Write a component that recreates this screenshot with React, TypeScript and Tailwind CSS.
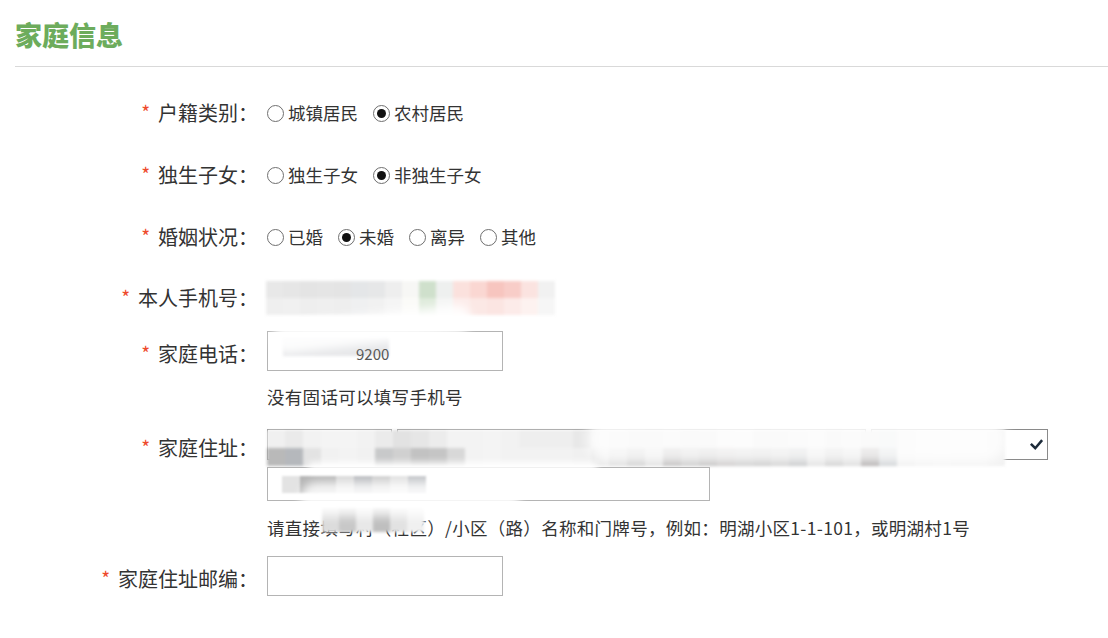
import React from "react";

type RadioProps = { label: string; checked?: boolean };

const Radio = ({ label, checked }: RadioProps) => (
  <span className="inline-flex items-center gap-[4px]">
    <span className="flex items-center justify-center w-[17px] h-[17px] rounded-full border border-[#6f6f6f] bg-white">
      {checked && <span className="w-[9px] h-[9px] rounded-full bg-[#111]" />}
    </span>
    <span>{label}</span>
  </span>
);

const Label = ({ text, low }: { text: string; low?: boolean }) => (
  <div className={"w-[258px] shrink-0 text-right text-[20px] leading-[28px] text-[#333] " + (low ? "pt-[6px]" : "")}>
    <span className="relative top-[-1px] mr-[8px] text-[19px] text-[#ee4a2c]">*</span>
    {text}
  </div>
);

// pixelated privacy blocks, as in the screenshot
const Mosaic = ({ rows, size = 17 }: { rows: string[][]; size?: number }) => (
  <div className="flex flex-col blur-[1.5px]">
    {rows.map((r, i) => (
      <div key={i} className="flex">
        {r.map((c, j) => (
          <span key={j} style={{ width: size, height: size, background: c }} />
        ))}
      </div>
    ))}
  </div>
);

const phoneRows = [
  ["#e8e8e8", "#e6e6e6", "#e4e4e4", "#e5e5e5", "#e4e4e4", "#e4e6e8", "#e6e7e8", "#eeeeee", "#f7f7f5", "#cfe0cc", "#eef0ef", "#fbe1dd", "#fad7d2", "#f7c5bf", "#f8cdc8", "#fbe3e0", "#f1f1f1"],
  ["#efefef", "#f0f0f0", "#eeeeee", "#efefef", "#eeeeee", "#eff0f1", "#f1f1f1", "#f5f5f5", "#fbfbf8", "#dfebdc", "#f4f5f4", "#fcecea", "#fbe8e5", "#fbe5e2", "#fcebe9", "#fdf2f0", "#f6f6f6"],
];

const addrRows = [
  ["#f0f0f0", "#eaeaea", "#f2f2f2", "#f4f4f4", "#f4f4f4", "#f2f2f2", "#ebebeb", "#e2e2e2", "#e6e6e6", "#ececec", "#f3f3f3", "#f3f3f3", "#f4f4f4", "#f2f2f2", "#eeeeee", "#eeeeee", "#eeeeee", "#e8e8e8", "#eeeeee", "#ebebeb", "#e7e7e7", "#e6e6e6", "#e9e9e9", "#e3e3e3", "#e4e4e4", "#eeeeee", "#efefef", "#e6e6e6", "#e7e7e7", "#e9e9e9", "#eeeeee", "#e7e7e7", "#ececec", "#e4e4e4", "#e1e4e6", "#ededed", "#f3f3f3", "#f4f4f4", "#f2f2f2", "#f2f2f2", "#f1f1f1"],
  ["#b9b9b9", "#b5b8bc", "#e3e3e3", "#f1f1f1", "#f3f3f3", "#f1f1f1", "#c8c9ca", "#d0d0d0", "#c2c2c2", "#c5c5c5", "#d8d8d8", "#f3f3f3", "#f4f4f4", "#f2f2f2", "#f2f2f2", "#f2f2f2", "#f2f2f2", "#f0f0f0", "#e8e8e8", "#d9d9d9", "#c8c8c8", "#dcdcdc", "#b5b3b3", "#c2c2c2", "#b9b8b8", "#c4c1c1", "#c6c6c6", "#c2c2c2", "#cacaca", "#bdbfc1", "#dddddd", "#c9c9c9", "#d7d7d7", "#a5a1a1", "#c9cdd0", "#f0f0f0", "#f3f3f3", "#f4f4f4", "#f3f3f3", "#f3f3f3", "#f2f2f2"],
];

const App = () => {
  return (
    <div className="relative w-[1108px] h-[638px] overflow-hidden bg-white font-['Noto_Sans_CJK_SC',sans-serif] text-[#333]">
      <h2 className="pl-[15px] pt-[17px] h-[66px] text-[27px] leading-[36px] font-black text-[#6dac5c]">
        家庭信息
      </h2>
      <div className="ml-[15px] border-t border-[#d9d9d9]" />

      <div className="flex flex-col pt-[26px] text-[17.5px] leading-[24px]">
        <div className="flex items-center h-[40px]">
          <Label text="户籍类别：" />
          <div className="ml-[9px] flex gap-[15px]">
            <Radio label="城镇居民" />
            <Radio label="农村居民" checked />
          </div>
        </div>

        <div className="mt-[22px] flex items-center h-[40px]">
          <Label text="独生子女：" />
          <div className="ml-[9px] flex gap-[15px]">
            <Radio label="独生子女" />
            <Radio label="非独生子女" checked />
          </div>
        </div>

        <div className="mt-[22px] flex items-center h-[40px]">
          <Label text="婚姻状况：" />
          <div className="ml-[9px] flex gap-[15px]">
            <Radio label="已婚" />
            <Radio label="未婚" checked />
            <Radio label="离异" />
            <Radio label="其他" />
          </div>
        </div>

        <div className="mt-[21px] flex items-center h-[40px]">
          <Label text="本人手机号：" />
          <div className="ml-[8px]">
            <Mosaic rows={phoneRows} />
          </div>
        </div>

        <div className="mt-[13px] flex items-center h-[40px]">
          <Label text="家庭电话：" low />
          <div className="ml-[9px] relative w-[236px] h-[40px] border border-[#b4b4b4] bg-white">
            <div className="absolute left-[15px] top-[6px] w-[106px] h-[18px] bg-[#e6e7e9] blur-[1.5px]" />
            <span className="absolute left-[88px] top-[12px] text-[15px] leading-[20px] text-[#555]">9200</span>
            <div className="absolute left-[4px] top-[-18px] w-[200px] h-[30px] rounded-full bg-white/90 blur-[4px] rotate-[-6deg]" />
          </div>
        </div>

        <div className="mt-[16px] pl-[267px] leading-[20px] tracking-[0.3px]">没有固话可以填写手机号</div>

        <div className="mt-[22px] flex items-center h-[31px]">
          <Label text="家庭住址：" low />
          <div className="ml-[9px] relative flex gap-[5px] h-[31px]">
            <div className="w-[125px] border border-[#8a8a8a]" />
            <div className="w-[469px] border border-[#8a8a8a]" />
            <div className="relative w-[177px] border border-[#8a8a8a]">
              <svg className="absolute right-[3px] top-[7px]" width="15" height="15" viewBox="0 0 12 12">
                <path d="M1.5 5.5 L5 9 L10.5 2.5" fill="none" stroke="#1d2b3a" strokeWidth="2" />
              </svg>
            </div>
            <div className="absolute left-[0px] top-[1px]">
              <Mosaic rows={addrRows} size={18} />
            </div>
            <div className="absolute left-[320px] top-[-14px] w-[420px] h-[48px] rounded-full bg-white/80 blur-[6px]" />
          </div>
        </div>

        <div className="mt-[7px] pl-[267px]">
          <div className="relative w-[443px] h-[34px] border border-[#b4b4b4] bg-white">
            <div className="absolute left-[14px] top-[8px] flex blur-[1.2px]">
              {["#e3e3e3", "#b5b5b5", "#b5b5b5", "#d7d7d7", "#b7b9bd", "#cdcdcd", "#e0e0e0", "#c2c4c8"].map((c, i) => (
                <span key={i} style={{ width: 18, height: 17, background: c }} />
              ))}
            </div>
            <div className="absolute left-[40px] top-[-6px] w-[290px] h-[10px] rounded-full bg-white/90 blur-[3px]" />
          </div>
        </div>

        <div className="relative mt-[17px] pl-[267px] leading-[20px] tracking-[0.3px]">
          请直接填写村（社区）/小区（路）名称和门牌号，例如：明湖小区1-1-101，或明湖村1号
          <div className="absolute left-[322px] top-[-10px] flex blur-[1.5px]">
            {["#dcdcdc", "#c8c8c8", "#e8e8e8", "#bfbfbf", "#e2e2e2", "#f0f0f0"].map((c, i) => (
              <span key={i} style={{ width: 17, height: 24, background: c }} />
            ))}
          </div>
          <div className="absolute left-[300px] top-[-36px] w-[220px] h-[34px] rounded-full bg-white/85 blur-[5px]" />
        </div>

        <div className="mt-[18px] flex items-center h-[40px]">
          <Label text="家庭住址邮编：" low />
          <div className="ml-[9px] w-[236px] h-[40px] border border-[#b4b4b4] bg-white" />
        </div>
      </div>
    </div>
  );
};

export default App;
